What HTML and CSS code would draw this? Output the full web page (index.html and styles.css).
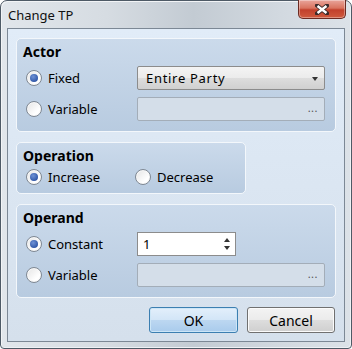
FILE: index.html
```html
<!DOCTYPE html>
<html lang="en">
<head>
  <meta charset="UTF-8">
  <title>Change TP</title>
  <link rel="stylesheet" href="styles.css">
</head>
<body>
  <div class="window">
    <div class="titlebar">
      <span class="title">Change TP</span>
      <div class="close">
        <svg width="14" height="11" viewBox="0 0 14 11">
          <path d="M2 1.5 L12 9.5 M12 1.5 L2 9.5" stroke="#3a2a2a" stroke-width="4.2" stroke-linecap="square"/>
          <path d="M2.5 2 L11.5 9 M11.5 2 L2.5 9" stroke="#fff" stroke-width="2.4"/>
        </svg>
      </div>
    </div>

    <div class="client">
      <div class="group">
        <div class="group-title">Actor</div>
        <div class="rows">
          <label class="option"><span class="radio checked"></span>Fixed</label>
          <div class="select">Entire Party<span class="arrow"></span></div>
          <label class="option"><span class="radio"></span>Variable</label>
          <div class="picker"><span class="dots">...</span></div>
        </div>
      </div>

      <div class="group small">
        <div class="group-title">Operation</div>
        <div class="choices">
          <label class="option"><span class="radio checked"></span>Increase</label>
          <label class="option"><span class="radio"></span>Decrease</label>
        </div>
      </div>

      <div class="group">
        <div class="group-title">Operand</div>
        <div class="rows">
          <label class="option"><span class="radio checked"></span>Constant</label>
          <div class="spin">1
            <span class="spin-btns"><span class="up"></span><span class="down"></span></span>
          </div>
          <label class="option"><span class="radio"></span>Variable</label>
          <div class="picker"><span class="dots">...</span></div>
        </div>
      </div>

      <div class="buttons">
        <button class="btn default">OK</button>
        <button class="btn">Cancel</button>
      </div>
    </div>
  </div>
</body>
</html>
```
FILE: styles.css
```css
body {
  margin: 0;
  font-family: "Noto Sans", sans-serif;
  font-size: 13px;
  color: #000;
  background: #fff;
}
.window {
  width: 352px;
  height: 349px;
  box-sizing: border-box;
  border: 1px solid #4e5a66;
  border-radius: 7px 7px 4px 4px;
  padding: 0 6px 6px 6px;
  display: flex;
  flex-direction: column;
  background: linear-gradient(90deg, #e1e6eb 0%, #d6dce2 30%, #c3cbd3 55%, #d2d9e0 80%, #dce2e8 100%);
  box-shadow: inset 1px 1px 0 #f2f4f6, inset -1px -1px 0 #eef1f4;
}
.titlebar {
  height: 27px;
  display: flex;
  justify-content: space-between;
  align-items: flex-start;
}
.title {
  padding: 6px 0 0 1px;
  line-height: 16px;
  color: #111;
}
.close {
  width: 46px;
  height: 18px;
  margin: -1px -1px 0 0;
  border: 1px solid #6b2a22;
  border-top: none;
  border-radius: 0 0 5px 5px;
  background: linear-gradient(#e9a59b 0%, #d9735f 45%, #c2402b 55%, #cf5a3e 100%);
  display: flex;
  align-items: center;
  justify-content: center;
  box-shadow: inset 0 0 0 1px rgba(255, 255, 255, 0.35);
}
.client {
  flex: 1;
  border: 1px solid #7c8895;
  padding: 9px 8px 0 8px;
  background: linear-gradient(#e1ecf8, #d5e0ec);
}
.group {
  width: 320px;
  height: 94px;
  box-sizing: border-box;
  border: 1px solid #f3f7fb;
  border-radius: 5px;
  padding: 5px 10px 0 9px;
  margin-bottom: 10px;
  background: linear-gradient(#cbdaeb, #b8cbe0);
}
.group.small {
  width: 230px;
  height: 52px;
}
.group-title {
  font-size: 14px;
  font-weight: bold;
  line-height: 16px;
  margin-left: -3px;
}
.rows {
  margin-top: 6px;
  display: grid;
  grid-template-columns: 111px 188px;
  grid-auto-rows: 24px;
  row-gap: 7px;
}
.choices {
  margin-top: 3px;
  display: grid;
  grid-template-columns: 109px auto;
  height: 20px;
}
.option {
  display: flex;
  align-items: center;
  gap: 6px;
}
.radio {
  width: 16px;
  height: 16px;
  box-sizing: border-box;
  border-radius: 50%;
  border: 1px solid #7f8893;
  background: linear-gradient(135deg, #e4e4e4, #ffffff 70%);
  box-shadow: inset 0 0 0 1px #f8f8f8;
  position: relative;
}
.radio.checked::after {
  content: "";
  position: absolute;
  left: 3px;
  top: 3px;
  width: 8px;
  height: 8px;
  border-radius: 50%;
  background: radial-gradient(circle at 40% 35%, #6f92d6, #2f56a6 75%);
}
.select {
  box-sizing: border-box;
  border: 1px solid #8c8c8c;
  border-radius: 2px;
  background: linear-gradient(#f4f4f4 0%, #ebebeb 50%, #dddddd 51%, #d0d0d0 100%);
  padding-left: 8px;
  line-height: 22px;
  position: relative;
  letter-spacing: 0.7px;
}
.arrow {
  position: absolute;
  right: 6px;
  top: 10px;
  border-left: 3.5px solid transparent;
  border-right: 3.5px solid transparent;
  border-top: 4px solid #333;
}
.picker {
  box-sizing: border-box;
  border: 1px solid #a3adb8;
  border-radius: 2px;
  background: #d4dee9;
  display: flex;
  justify-content: flex-end;
  align-items: center;
  padding-right: 6px;
}
.dots {
  color: #555;
  font-size: 11px;
  letter-spacing: 0.5px;
  margin-top: -4px;
}
.spin {
  width: 99px;
  box-sizing: border-box;
  border: 1px solid #8c8c8c;
  background: #fff;
  padding-left: 5px;
  line-height: 22px;
  position: relative;
}
.spin-btns {
  position: absolute;
  right: 5px;
  top: 5px;
  display: flex;
  flex-direction: column;
  gap: 4px;
}
.up {
  border-left: 3.5px solid transparent;
  border-right: 3.5px solid transparent;
  border-bottom: 4px solid #333;
}
.down {
  border-left: 3.5px solid transparent;
  border-right: 3.5px solid transparent;
  border-top: 4px solid #333;
}
.buttons {
  display: flex;
  justify-content: flex-end;
  gap: 9px;
  padding-right: 1px;
  margin-top: -1px;
}
.btn {
  width: 88px;
  height: 26px;
  font-family: "Noto Sans", sans-serif;
  font-size: 14px;
  color: #000;
  border: 1px solid #707070;
  border-radius: 3px;
  background: linear-gradient(#f3f3f3 0%, #ebebeb 50%, #dddddd 51%, #cfcfcf 100%);
  box-shadow: inset 0 0 0 1px #fbfbfb;
  padding: 0;
}
.btn.default {
  width: 89px;
  border-color: #3c7fb1;
  background: linear-gradient(#e3effb 0%, #d2e5f7 50%, #bcd7f1 51%, #a9cbec 100%);
  box-shadow: inset 0 0 0 1px #cde6f7;
}
```
